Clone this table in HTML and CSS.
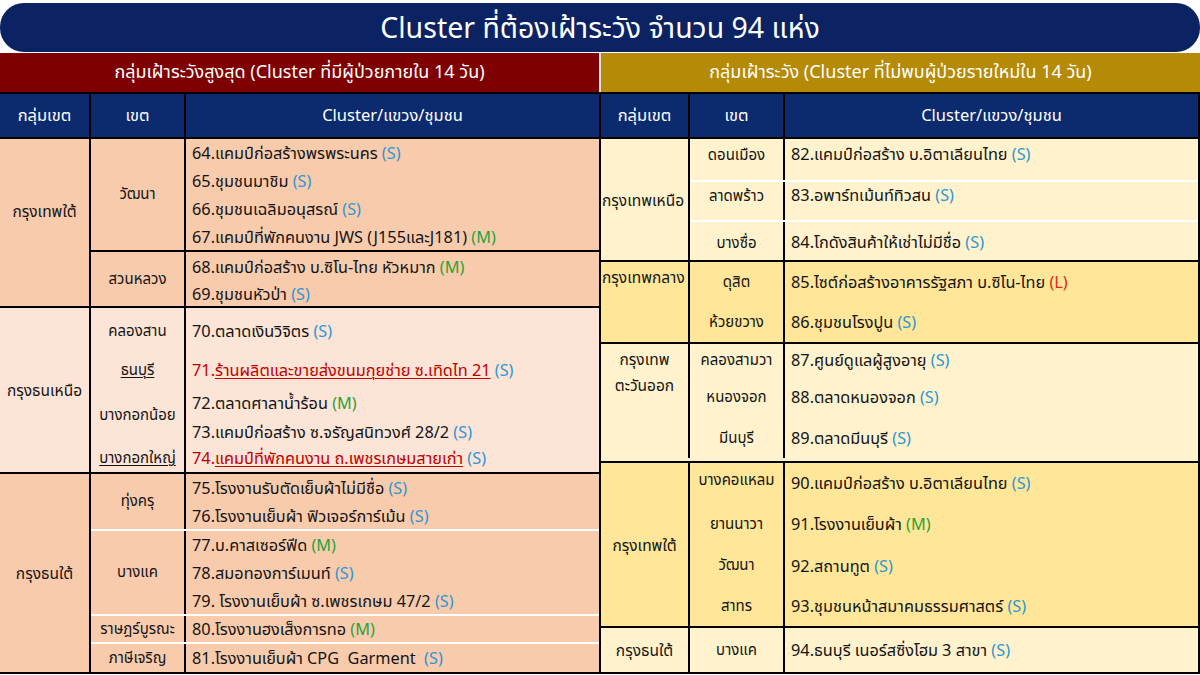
FILE: index.html
```html
<!DOCTYPE html>
<html lang="th">
<head>
<meta charset="utf-8">
<title>Cluster ที่ต้องเฝ้าระวัง</title>
<link rel="stylesheet" href="styles.css">
</head>
<body>
<div class="page">
  <header class="title">Cluster ที่ต้องเฝ้าระวัง จำนวน 94 แห่ง</header>
  <div class="sections">
    <section class="sec sec-left">
      <div class="band band-red">กลุ่มเฝ้าระวังสูงสุด (Cluster ที่มีผู้ป่วยภายใน 14 วัน)</div>
      <div class="thead">
        <div class="c1">กลุ่มเขต</div>
        <div class="c2">เขต</div>
        <div class="c3">Cluster/แขวง/ชุมชน</div>
      </div>

      <div class="group peach">
        <div class="gname up">กรุงเทพใต้</div>
        <div class="districts">
          <div class="district">
            <div class="dname">วัฒนา</div>
            <div class="items">
              <div class="item h28">64.แคมป์ก่อสร้างพรพระนคร <span class="s">(S)</span></div>
              <div class="item h28">65.ชุมชนมาชิม <span class="s">(S)</span></div>
              <div class="item h28">66.ชุมชนเฉลิมอนุสรณ์ <span class="s">(S)</span></div>
              <div class="item h27">67.แคมป์ที่พักคนงาน JWS (J155และJ181) <span class="m">(M)</span></div>
            </div>
          </div>
          <div class="district sep-black">
            <div class="dname">สวนหลวง</div>
            <div class="items">
              <div class="item h30">68.แคมป์ก่อสร้าง บ.ซิโน-ไทย หัวหมาก <span class="m">(M)</span></div>
              <div class="item h24">69.ชุมชนหัวป่า <span class="s">(S)</span></div>
            </div>
          </div>
        </div>
      </div>

      <div class="group peach-light">
        <div class="gname">กรุงธนเหนือ</div>
        <div class="districts">
          <div class="district">
            <div class="dname">คลองสาน</div>
            <div class="items">
              <div class="item h46">70.ตลาดเงินวิจิตร <span class="s">(S)</span></div>
            </div>
          </div>
          <div class="district">
            <div class="dname"><u>ธนบุรี</u></div>
            <div class="items">
              <div class="item h32 red">71.<u>ร้านผลิตและขายส่งขนมกุยช่าย ซ.เทิดไท 21</u>&nbsp;<span class="s">(S)</span></div>
            </div>
          </div>
          <div class="district">
            <div class="dname">บางกอกน้อย</div>
            <div class="items">
              <div class="item h34">72.ตลาดศาลาน้ำร้อน <span class="m">(M)</span></div>
              <div class="item h24">73.แคมป์ก่อสร้าง ซ.จรัญสนิทวงศ์ 28/2 <span class="s">(S)</span></div>
            </div>
          </div>
          <div class="district">
            <div class="dname"><u>บางกอกใหญ่</u></div>
            <div class="items">
              <div class="item h28 red">74.<u>แคมป์ที่พักคนงาน ถ.เพชรเกษมสายเก่า</u>&nbsp;<span class="s">(S)</span></div>
            </div>
          </div>
        </div>
      </div>

      <div class="group peach last">
        <div class="gname">กรุงธนใต้</div>
        <div class="districts">
          <div class="district">
            <div class="dname">ทุ่งครุ</div>
            <div class="items">
              <div class="item h28">75.โรงงานรับตัดเย็บผ้าไม่มีชื่อ <span class="s">(S)</span></div>
              <div class="item h27">76.โรงงานเย็บผ้า ฟิวเจอร์การ์เม้น <span class="s">(S)</span></div>
            </div>
          </div>
          <div class="district sep-white">
            <div class="dname">บางแค</div>
            <div class="items">
              <div class="item h28">77.บ.คาสเซอร์ฟีด <span class="m">(M)</span></div>
              <div class="item h28">78.สมอทองการ์เมนท์ <span class="s">(S)</span></div>
              <div class="item h27">79. โรงงานเย็บผ้า ซ.เพชรเกษม 47/2 <span class="s">(S)</span></div>
            </div>
          </div>
          <div class="district sep-white">
            <div class="dname">ราษฎร์บูรณะ</div>
            <div class="items">
              <div class="item h26">80.โรงงานฮงเส็งการทอ <span class="m">(M)</span></div>
            </div>
          </div>
          <div class="district sep-white">
            <div class="dname">ภาษีเจริญ</div>
            <div class="items">
              <div class="item h28">81.โรงงานเย็บผ้า CPG&nbsp; Garment&nbsp; <span class="s">(S)</span></div>
            </div>
          </div>
        </div>
      </div>
    </section>

    <section class="sec sec-right">
      <div class="band band-gold">กลุ่มเฝ้าระวัง (Cluster ที่ไม่พบผู้ป่วยรายใหม่ใน 14 วัน)</div>
      <div class="thead">
        <div class="c1">กลุ่มเขต</div>
        <div class="c2">เขต</div>
        <div class="c3">Cluster/แขวง/ชุมชน</div>
      </div>

      <div class="group cream">
        <div class="gname left">กรุงเทพเหนือ</div>
        <div class="districts">
          <div class="district row h41 pt3">
            <div class="dname">ดอนเมือง</div>
            <div class="items"><div class="item">82.แคมป์ก่อสร้าง บ.อิตาเลียนไทย <span class="s">(S)</span></div></div>
          </div>
          <div class="district row sep-white h40 pt1">
            <div class="dname">ลาดพร้าว</div>
            <div class="items"><div class="item">83.อพาร์ทเม้นท์ทิวสน <span class="s">(S)</span></div></div>
          </div>
          <div class="district row sep-white h40 pt8">
            <div class="dname">บางซื่อ</div>
            <div class="items"><div class="item">84.โกดังสินค้าให้เช่าไม่มีชื่อ <span class="s">(S)</span></div></div>
          </div>
        </div>
      </div>

      <div class="group yellow">
        <div class="gname left top">กรุงเทพกลาง</div>
        <div class="districts">
          <div class="district">
            <div class="dname">ดุสิต</div>
            <div class="items"><div class="item h40">85.ไซต์ก่อสร้างอาคารรัฐสภา บ.ซิโน-ไทย <span class="l">(L)</span></div></div>
          </div>
          <div class="district">
            <div class="dname">ห้วยขวาง</div>
            <div class="items"><div class="item h40">86.ชุมชนโรงปูน <span class="s">(S)</span></div></div>
          </div>
        </div>
      </div>

      <div class="group cream padb3">
        <div class="gname top">กรุงเทพ<br>ตะวันออก</div>
        <div class="districts">
          <div class="district">
            <div class="dname">คลองสามวา</div>
            <div class="items"><div class="item h32">87.ศูนย์ดูแลผู้สูงอายุ <span class="s">(S)</span></div></div>
          </div>
          <div class="district">
            <div class="dname">หนองจอก</div>
            <div class="items"><div class="item h42">88.ตลาดหนองจอก <span class="s">(S)</span></div></div>
          </div>
          <div class="district">
            <div class="dname">มีนบุรี</div>
            <div class="items"><div class="item h40">89.ตลาดมีนบุรี <span class="s">(S)</span></div></div>
          </div>
        </div>
      </div>

      <div class="group yellow">
        <div class="gname">กรุงเทพใต้</div>
        <div class="districts">
          <div class="district">
            <div class="dname raise">บางคอแหลม</div>
            <div class="items"><div class="item h40">90.แคมป์ก่อสร้าง บ.อิตาเลียนไทย <span class="s">(S)</span></div></div>
          </div>
          <div class="district">
            <div class="dname">ยานนาวา</div>
            <div class="items"><div class="item h42">91.โรงงานเย็บผ้า <span class="m">(M)</span></div></div>
          </div>
          <div class="district">
            <div class="dname">วัฒนา</div>
            <div class="items"><div class="item h41">92.สถานทูต <span class="s">(S)</span></div></div>
          </div>
          <div class="district">
            <div class="dname">สาทร</div>
            <div class="items"><div class="item h40">93.ชุมชนหน้าสมาคมธรรมศาสตร์ <span class="s">(S)</span></div></div>
          </div>
        </div>
      </div>

      <div class="group cream">
        <div class="gname">กรุงธนใต้</div>
        <div class="districts">
          <div class="district">
            <div class="dname">บางแค</div>
            <div class="items"><div class="item h44">94.ธนบุรี เนอร์สซิ่งโฮม 3 สาขา <span class="s">(S)</span></div></div>
          </div>
        </div>
      </div>
    </section>
  </div>
</div>
</body>
</html>
```

FILE: styles.css
```css
* { box-sizing: border-box; }
html, body { margin: 0; padding: 0; background: #ffffff; }
body {
  font-family: "Noto Sans", "Noto Sans Thai", "Tahoma", sans-serif;
  color: #141414;
  width: 1200px;
  height: 675px;
  overflow: hidden;
}
.page { width: 1200px; }

.title {
  margin-top: 3px;
  height: 49px;
  background: #0b2263;
  color: #ffffff;
  border-radius: 24px;
  display: flex;
  align-items: center;
  justify-content: center;
  font-size: 28.5px;
  line-height: 1;
}

.sections { display: flex; margin-top: 1px; }
.sec { display: flex; flex-direction: column; }
.sec-left { width: 599px; }
.sec-right { flex: 1; }

.band {
  height: 39px;
  display: flex;
  align-items: center;
  justify-content: center;
  color: #ffffff;
  font-size: 18px;
}
.band-red { background: #7f0000; }
.band-gold { background: #b58a06; border-left: 2px solid #f4efe0; }

.thead {
  display: flex;
  height: 47px;
  background: #0c2a6e;
  color: #ffffff;
  border-top: 2px solid #000;
  border-bottom: 2px solid #000;
  font-size: 16.5px;
}
.sec-right .thead, .sec-right .group { border-left: 2px solid #000; border-right: 2px solid #000; }
.thead > div { display: flex; align-items: center; justify-content: center; }
.c1 { width: 91px; border-right: 2px solid #000; }
.c2 { width: 95px; border-right: 2px solid #000; }
.c3 { flex: 1; }
.sec-right .c1 { width: 89px; }

.group {
  display: flex;
  border-bottom: 2px solid #000;
  font-size: 16.3px;
}
.peach { background: #f8cbad; }
.peach-light { background: #fce4d6; }
.cream { background: #fff2cc; }
.yellow { background: #ffe699; }
.padb3 { padding-bottom: 3px; }

.gname {
  width: 91px;
  border-right: 2px solid #000;
  display: flex;
  align-items: center;
  justify-content: center;
  text-align: center;
  line-height: 26px;
  white-space: nowrap;
  font-size: 15.5px;
}
.sec-right .gname { width: 89px; }
.gname.up { padding-bottom: 24px; }
.gname.left { justify-content: flex-start; padding-left: 1px; }
.gname.top { align-items: flex-start; padding-top: 2px; }

.districts { flex: 1; display: flex; flex-direction: column; }
.district { display: flex; }
.sep-black { border-top: 2px solid #000; }
.sep-white { border-top: 2px solid #ffffff; }

.dname {
  width: 95px;
  border-right: 2px solid #000;
  display: flex;
  align-items: center;
  justify-content: center;
  white-space: nowrap;
  font-size: 15px;
}
.dname.raise { align-items: flex-start; padding-top: 6px; }

.items { flex: 1; display: flex; flex-direction: column; padding-left: 6px; }
.item { display: flex; align-items: center; white-space: pre; line-height: 24px; }
.district.row .dname { align-items: flex-start; line-height: 24px; }
.district.row .item { height: 24px; }

.h24 { height: 24px; }
.h26 { height: 26px; }
.h27 { height: 27px; }
.h28 { height: 28px; }
.h30 { height: 30px; }
.h32 { height: 32px; }
.h34 { height: 34px; }
.h38 { height: 38px; }
.h40 { height: 40px; }
.h41 { height: 41px; }
.h42 { height: 42px; }
.h44 { height: 44px; }
.h46 { height: 46px; }
.pt1 > * { padding-top: 1px; }
.pt3 > * { padding-top: 3px; }
.pt8 > * { padding-top: 8px; }

.s { color: #2e96d2; }
.m { color: #28a33a; }
.l { color: #e0281c; }
.red { color: #c00000; }
u { text-decoration-thickness: 1px; text-underline-offset: 2px; }
```
